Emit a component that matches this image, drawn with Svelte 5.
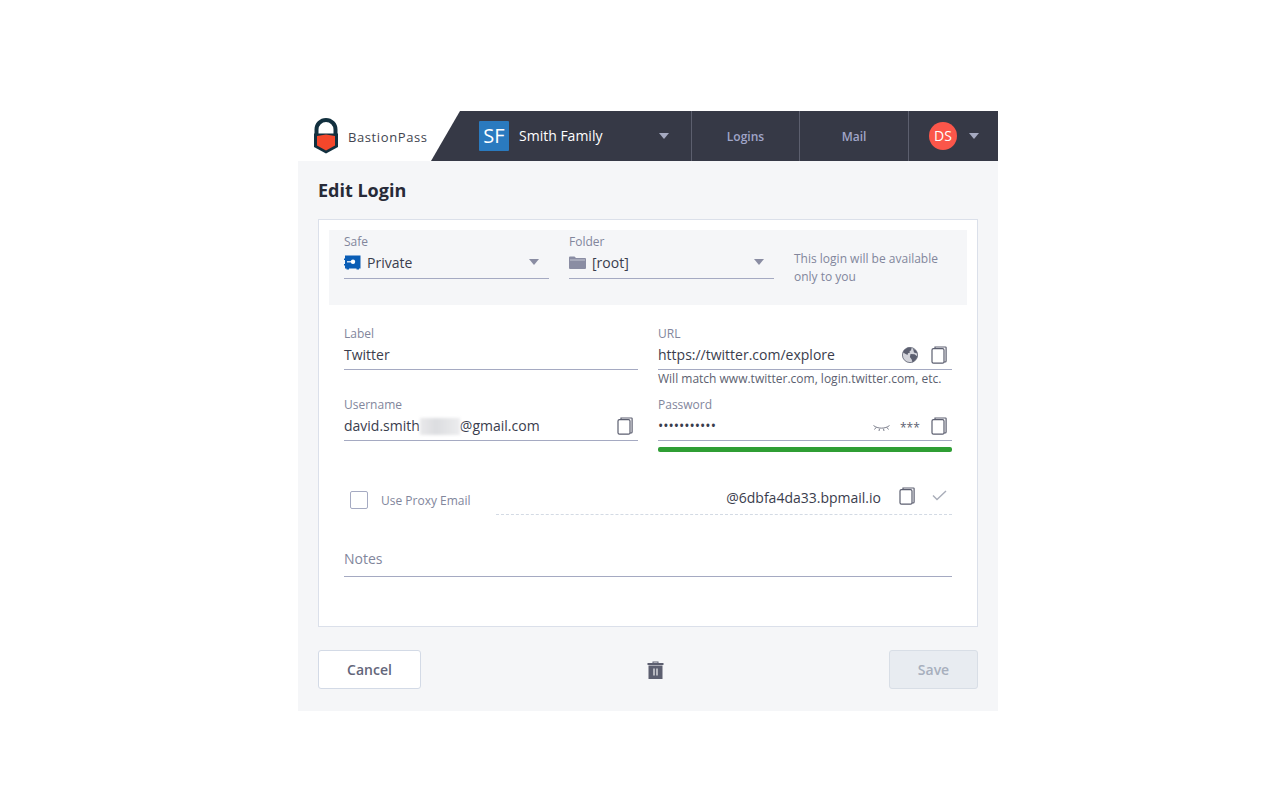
<script>
  // fields on the form are static, this is only a layout mock
</script>

{#snippet copyIcon()}
  <svg class="copy" width="16" height="18" viewBox="0 0 16 18" fill="none" stroke="#5c5f70" stroke-width="1.2">
    <path d="M4 2.500V1h10.500a.6.600 0 0 1 .6.600V15a1 1 0 0 1-1 1H13" />
    <rect x="1" y="2.600" width="12" height="14.600" rx="1.500" />
  </svg>
{/snippet}

{#snippet caret()}
  <span class="caret"></span>
{/snippet}

<div class="app">
  <header class="topbar">
    <div class="brand">
      <svg width="24" height="36" viewBox="0 0 24 36">
        <path d="M2.500 17V11.500a9.500 9.500 0 0 1 19 0V17" fill="none" stroke="#12303f" stroke-width="4" />
        <path d="M0 15.500h24v13.500l-12 6.500-12-6.500z" fill="#12303f" />
        <path d="M3 18l9-1.500 9 1.500v9.500l-9 5-9-5z" fill="#f4472b" />
      </svg>
      <span class="brand-name">BastionPass</span>
    </div>
    <nav class="nav">
      <div class="account">
        <span class="tile">SF</span>
        <span class="account-name">Smith Family</span>
        {@render caret()}
      </div>
      <a class="nav-link logins" href="#logins">Logins</a>
      <a class="nav-link mail" href="#mail">Mail</a>
      <div class="user">
        <span class="avatar">DS</span>
        {@render caret()}
      </div>
    </nav>
  </header>

  <main class="page">
    <h1>Edit Login</h1>

    <form class="card">
      <div class="panel">
        <div class="field select">
          <label>Safe</label>
          <div class="value">
            <svg class="pick-icon" width="17" height="15" viewBox="0 0 17 15">
              <path d="M1 .5h15.500v13H15v1h-2.500v-1H5v1H2.500v-1H1v-3H0V9h1V5H0V3.500h1z" fill="#0a5db5" />
              <circle cx="9" cy="6.800" r="2.200" fill="#fff" />
              <rect x="3" y="6.200" width="5" height="1.200" fill="#fff" />
            </svg>
            <span>Private</span>
            {@render caret()}
          </div>
        </div>
        <div class="field select">
          <label>Folder</label>
          <div class="value">
            <svg class="pick-icon" width="17" height="13" viewBox="0 0 17 13">
              <path d="M0 1.500A1 1 0 0 1 1 .5h4.500L7 2h9a1 1 0 0 1 1 1v9a1 1 0 0 1-1 1H1a1 1 0 0 1-1-1z" fill="#8a8da3" />
              <path d="M1 3.500h15v1H1z" fill="#c5c7d3" />
            </svg>
            <span>[root]</span>
            {@render caret()}
          </div>
        </div>
        <p class="note">This login will be available only to you</p>
      </div>

      <div class="fields">
        <div class="field">
          <label>Label</label>
          <div class="value"><span>Twitter</span></div>
        </div>
        <div class="field">
          <label>URL</label>
          <div class="value">
            <span>https://twitter.com/explore</span>
            <svg class="globe" width="16" height="16" viewBox="0 0 16 16">
              <circle cx="8" cy="8" r="7.600" fill="#d3d4db" stroke="#5c5f70" stroke-width="0.800" />
              <path d="M2 3l4-2.500 3.500.5-.5 2.500-1.500.5.500 1.500-2 .7-.5 1.800-1.800-1L1 5.500zM8.500 7l4 .300 3 2.200-2 3.500-3 2.500-.8-3-1.800-2.500zM11 1.500l3 2 1.500 3-3.500-1z" fill="#5c5f70" />
            </svg>
            {@render copyIcon()}
          </div>
          <small class="hint">Will match www.twitter.com, login.twitter.com, etc.</small>
        </div>
        <div class="field username">
          <label>Username</label>
          <div class="value">
            <span>david.smith<span class="blurred"></span>@gmail.com</span>
            {@render copyIcon()}
          </div>
        </div>
        <div class="field username">
          <label>Password</label>
          <div class="value">
            <span class="dots">•••••••••••</span>
            <svg class="eye" width="17" height="8" viewBox="0 0 17 8" fill="none" stroke="#5c5f70" stroke-width="0.800">
              <path d="M.5 1.500c4 3.500 12 3.500 16 0M3 3.500L1.500 5.500M6.500 4.800L6 7M10.500 4.800L11 7M14 3.500l1.500 2" />
            </svg>
            <span class="stars">***</span>
            {@render copyIcon()}
          </div>
          <div class="strength"></div>
        </div>
      </div>

      <div class="proxy">
        <label class="check"><span class="box"></span><span>Use Proxy Email</span></label>
        <div class="proxy-value">
          <span>@6dbfa4da33.bpmail.io</span>
          {@render copyIcon()}
          <svg class="tick" width="15" height="11" viewBox="0 0 15 11" fill="none" stroke="#a9adb9" stroke-width="1.400">
            <path d="M1 5.500l4 4 9-8.500" />
          </svg>
        </div>
      </div>

      <div class="notes">Notes</div>
    </form>

    <footer class="actions">
      <button class="btn cancel" type="button">Cancel</button>
      <svg class="trash" width="17" height="18" viewBox="0 0 17 18">
        <path d="M5.500 2V.500h6V2h5v2H.500V2zM6.500 1.500V2h4v-.5z" fill="#5c5f70" fill-rule="evenodd" />
        <path d="M1.500 4.500h14V18h-14z" fill="#5c5f70" />
        <path d="M7 7.500v7M10 7.500v7" stroke="#fff" stroke-width="1.100" />
      </svg>
      <button class="btn save" type="button" disabled>Save</button>
    </footer>
  </main>
</div>

<style>
  :global(body) {
    margin: 0;
    background: #fff;
  }

  .app {
    width: 700px;
    margin: 111px 0 0 298px;
    font-family: "Open Sans", "Noto Sans", sans-serif;
    color: #3a3d4d;
  }

  .topbar {
    display: flex;
    height: 50px;
  }

  .brand {
    width: 133px;
    flex: none;
    display: flex;
    align-items: center;
    padding-left: 16px;
    box-sizing: border-box;
    gap: 10px;
  }

  .brand svg {
    flex: none;
  }

  .brand-name {
    font-size: 13px;
    letter-spacing: 0.6px;
    color: #42454f;
    margin-top: 2px;
  }

  .nav {
    flex: 1;
    display: flex;
    align-items: stretch;
    background: #363946;
    clip-path: polygon(29px 0, 100% 0, 100% 100%, 0 100%);
  }

  .account {
    width: 260px;
    flex: none;
    box-sizing: border-box;
    padding-left: 48px;
    display: flex;
    align-items: center;
  }

  .tile {
    width: 30px;
    height: 30px;
    background: #2a7abf;
    color: #fff;
    font-size: 20px;
    line-height: 30px;
    text-align: center;
    border-radius: 1px;
  }

  .account-name {
    color: #fff;
    font-size: 14px;
    font-weight: 500;
    margin-left: 10px;
    margin-top: -1px;
    flex: 1;
  }

  .account .caret {
    margin-right: 22px;
    border-top-color: #a5a9c0;
  }

  .caret {
    width: 0;
    height: 0;
    flex: none;
    border-left: 5.500px solid transparent;
    border-right: 5.500px solid transparent;
    border-top: 6px solid #8a8da3;
  }

  .nav-link {
    display: flex;
    align-items: center;
    justify-content: center;
    border-left: 1px solid #5c5f6e;
    font-size: 12px;
    font-weight: 600;
    color: #a0a5c8;
    text-decoration: none;
    box-sizing: border-box;
  }

  .logins {
    width: 108px;
  }

  .mail {
    width: 109px;
  }

  .user {
    flex: 1;
    border-left: 1px solid #5c5f6e;
    display: flex;
    align-items: center;
    padding-left: 20px;
    gap: 12px;
  }

  .user .caret {
    border-top-color: #a5a9c0;
  }

  .avatar {
    width: 28px;
    height: 28px;
    border-radius: 50%;
    background: #fb564a;
    color: #fff;
    font-size: 14px;
    line-height: 28px;
    text-align: center;
  }

  .page {
    background: #f5f6f8;
    height: 550px;
    padding: 0 20px;
    box-sizing: border-box;
  }

  h1 {
    margin: 0;
    padding-top: 17px;
    height: 58px;
    box-sizing: border-box;
    font-size: 18px;
    line-height: 25px;
    font-weight: 700;
    color: #272a38;
  }

  .card {
    height: 408px;
    box-sizing: border-box;
    background: #fff;
    border: 1px solid #dbe0ea;
    padding: 10px 10px 0;
  }

  .panel {
    height: 75px;
    box-sizing: border-box;
    background: #f5f6f8;
    padding: 4px 15px 0;
    display: flex;
    gap: 20px;
  }

  .select {
    width: 205px;
    flex: none;
  }

  .note {
    margin: 16px 0 0;
    font-size: 12px;
    line-height: 18px;
    color: #82869c;
    width: 160px;
  }

  .field label {
    display: block;
    font-size: 12px;
    line-height: 16px;
    color: #82869c;
  }

  .value {
    display: flex;
    align-items: center;
    height: 28px;
    box-sizing: border-box;
    border-bottom: 1px solid #a5aac2;
    font-size: 14px;
    color: #3a3d4d;
    padding-bottom: 2px;
  }

  .select .value {
    height: 29px;
    padding-bottom: 3px;
  }

  .value > span:first-of-type {
    flex: 1;
  }

  .pick-icon {
    flex: none;
    margin: -1px 6px 0 0;
  }

  .select .caret {
    margin-right: 10px;
    margin-top: -1px;
  }

  .fields {
    display: grid;
    grid-template-columns: 294px 294px;
    column-gap: 20px;
    padding: 21px 15px 0;
    grid-template-rows: 71px auto;
  }

  .copy {
    flex: none;
    margin-left: 13px;
    margin-top: 1px;
    margin-right: 5px;
  }

  .globe {
    flex: none;
  }

  .hint {
    display: block;
    font-size: 12px;
    line-height: 18px;
    color: #5c5f70;
  }

  .blurred {
    display: inline-block;
    width: 40px;
    height: 17px;
    vertical-align: -4px;
    background: linear-gradient(90deg, #e9e9eb, #dcdde0 40%, #e4e5e7 70%, #ececee);
    filter: blur(1.5px);
  }

  .dots {
    font-size: 14px;
    letter-spacing: 0;
  }

  .eye {
    flex: none;
    margin-top: 5px;
    margin-right: 10px;
  }

  .stars {
    font-size: 12px;
    color: #5c5f70;
    width: 20px;
    flex: none;
    padding-top: 3px;
  }

  .stars + .copy {
    margin-left: 11px;
  }

  .strength {
    height: 5px;
    margin-top: 6px;
    background: #2f9e34;
    border-radius: 2px;
  }

  .proxy {
    display: flex;
    align-items: flex-end;
    margin: 14px 15px 0 21px;
    height: 49px;
    box-sizing: border-box;
  }

  .check {
    display: flex;
    align-items: center;
    width: 146px;
    flex: none;
    font-size: 12px;
    color: #82869c;
    gap: 13px;
    height: 30px;
  }

  .box {
    width: 18px;
    height: 18px;
    box-sizing: border-box;
    border: 1px solid #a5aac2;
    border-radius: 2px;
    background: #fff;
  }

  .proxy-value {
    flex: 1;
    display: flex;
    justify-content: flex-end;
    align-items: center;
    height: 33px;
    box-sizing: border-box;
    border-bottom: 1px dashed #d3dae4;
    font-size: 14px;
    color: #3a3d4d;
    padding: 0 5px 2px 0;
  }

  .proxy-value .copy {
    margin: -2px 18px 0 17px;
    position: relative;
    left: 1px;
  }

  .tick {
    margin-top: -3px;
  }

  .notes {
    margin: 29px 15px 0;
    height: 33px;
    box-sizing: border-box;
    border-bottom: 1px solid #a5aac2;
    font-size: 14px;
    line-height: 30px;
    color: #82869c;
  }

  .actions {
    display: flex;
    justify-content: space-between;
    align-items: center;
    margin-top: 23px;
  }

  .btn {
    height: 39px;
    box-sizing: border-box;
    border-radius: 3px;
    font-family: inherit;
    font-size: 14px;
    font-weight: 600;
  }

  .cancel {
    width: 103px;
    background: #fff;
    border: 1px solid #d3dae6;
    color: #63667a;
  }

  .save {
    width: 89px;
    background: #e8ecf1;
    border: 1px solid #d8dee6;
    color: #a7afbd;
  }
</style>
